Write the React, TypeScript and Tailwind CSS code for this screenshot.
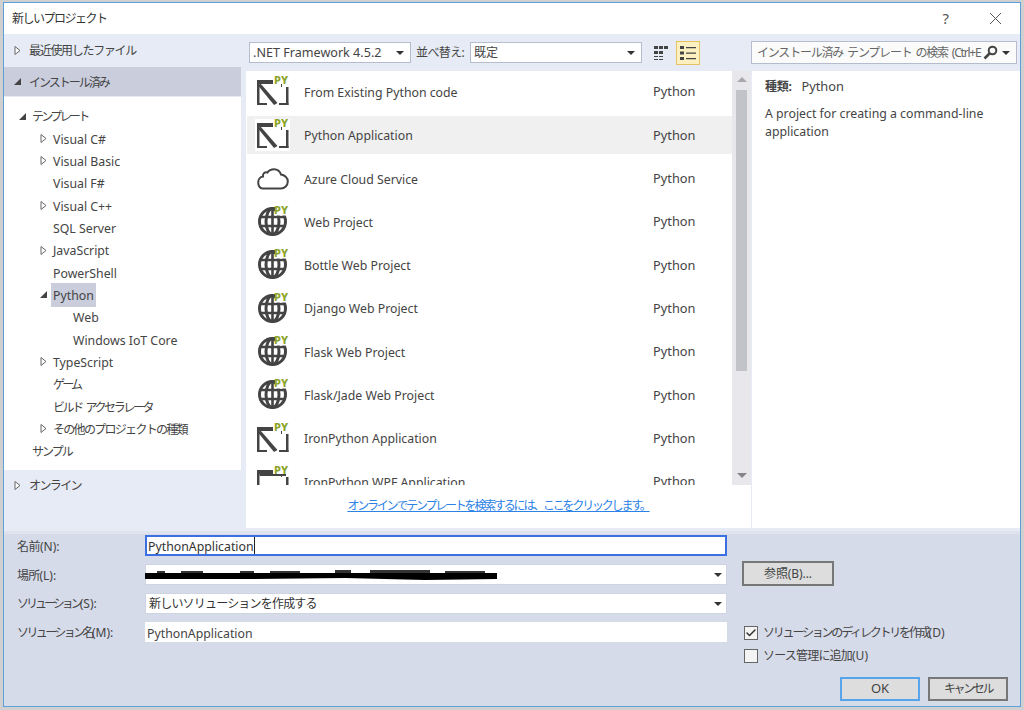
import { Check } from "lucide-react";

const templates = [
  ["From Existing Python code", "app"],
  ["Python Application", "app"],
  ["Azure Cloud Service", "cloud"],
  ["Web Project", "web"],
  ["Bottle Web Project", "web"],
  ["Django Web Project", "web"],
  ["Flask Web Project", "web"],
  ["Flask/Jade Web Project", "web"],
  ["IronPython Application", "app"],
  ["IronPython WPF Application", "wpf"],
];

const jp = "text-[12px]";

const tree = [
  { label: "テンプレート", indent: 32, arrow: "open", cls: `${jp} tracking-[-2.7px]` },
  { label: "Visual C#", indent: 53, arrow: "closed" },
  { label: "Visual Basic", indent: 53, arrow: "closed" },
  { label: "Visual F#", indent: 53 },
  { label: "Visual C++", indent: 53, arrow: "closed" },
  { label: "SQL Server", indent: 53 },
  { label: "JavaScript", indent: 53, arrow: "closed" },
  { label: "PowerShell", indent: 53 },
  { label: "Python", indent: 53, arrow: "open", selected: true },
  { label: "Web", indent: 73 },
  { label: "Windows IoT Core", indent: 73 },
  { label: "TypeScript", indent: 53, arrow: "closed" },
  { label: "ゲーム", indent: 53, cls: `${jp} tracking-[-2.8px]` },
  { label: "ビルド アクセラレータ", indent: 53, cls: `${jp} tracking-[-2.4px] [word-spacing:3px]` },
  { label: "その他のプロジェクトの種類", indent: 53, arrow: "closed", cls: `${jp} tracking-[-1.7px]` },
  { label: "サンプル", indent: 32, cls: `${jp} tracking-[-2px]` },
];

const formLabels = [
  ["名前", "(N):", "tracking-[-0.5px]"],
  ["場所", "(L):", "tracking-[-0.8px]"],
  ["ソリューション", "(S):", "tracking-[-3px]"],
  ["ソリューション名", "(M):", "tracking-[-2.6px]"],
];

function Arrow({ type }: { type?: string }) {
  if (type === "open") {
    return (
      <svg width="9" height="9" viewBox="0 0 9 9">
        <path d="M8 1V8H1Z" fill="#444" />
      </svg>
    );
  }
  return (
    <svg width="9" height="11" viewBox="0 0 9 11">
      <path d="M2 1.5L7 5.5L2 9.5Z" fill="#fff" stroke="#666" />
    </svg>
  );
}

function Caret() {
  return (
    <svg width="8" height="4" viewBox="0 0 8 4" className="shrink-0">
      <path d="M0 0H8L4 4Z" fill="#333" />
    </svg>
  );
}

function Py() {
  return (
    <span className="absolute right-0 top-[-2px] pl-px text-[11px] leading-[11px] font-extrabold tracking-[0.3px] text-[#8ca52a]">
      PY
    </span>
  );
}

function TemplateIcon({ kind }: { kind: string }) {
  if (kind === "cloud") {
    return (
      <svg width="32" height="22" viewBox="0 0 32 22" fill="none">
        <path
          d="M5.5 20.5C2.8 20.5 1.2 17.5 1.2 14.5C1.2 11.5 3 8.8 6 8.5C5.5 5.5 8 3.5 10.5 4.5C12 2.2 14.5 1.2 17 1.2C20.5 1.2 23 3.3 24 6.5C27.5 7 30.8 9.8 30.8 13.5C30.8 17.5 27.5 20.5 24 20.5Z"
          stroke="#444"
          strokeWidth="2"
        />
      </svg>
    );
  }
  if (kind === "web") {
    return (
      <div className="relative h-[32px] w-[32px]">
        <svg width="32" height="32" viewBox="0 0 32 32" fill="none" stroke="#444" strokeWidth="3">
          <circle cx="15.5" cy="15.5" r="13" />
          <ellipse cx="15.5" cy="15.5" rx="6.5" ry="13" />
          <path d="M2 11H29M2 20H29M15.5 3V28" strokeWidth="2.6" />
          <rect x="18" y="-1" width="15" height="10.5" fill="#fff" stroke="none" />
        </svg>
        <Py />
      </div>
    );
  }
  return (
    <div className="relative h-[32px] w-[32px]">
      <svg width="32" height="32" viewBox="0 0 32 32" fill="#444">
        <rect x="0" y="4" width="16" height="4" />
        <rect x="0" y="8" width="2.5" height="21" />
        <rect x="29" y="11" width="2.5" height="18" />
        <rect x="24" y="8" width="1" height="3" />
        {kind === "app" && (
          <>
            <rect x="0" y="27" width="10" height="2" />
            <rect x="22" y="27" width="9.5" height="2" />
            <path d="M1 9.5L3.5 7.5L20.5 27L17 29Z" />
          </>
        )}
        {kind === "wpf" && <rect x="2.5" y="8" width="26.5" height="2" />}
      </svg>
      <Py />
    </div>
  );
}

export default function App() {
  return (
    <div className="h-[710px] w-[1024px] overflow-hidden bg-[#d0d0d0] pl-[3px] pr-[3px] pt-[2px] pb-[3px] text-[12.3px] text-[#444] [font-family:'Noto_Sans','Noto_Sans_CJK_JP',sans-serif]">
      <div className="flex h-[705px] w-[1018px] flex-col border border-[#5f9fd8] bg-[#d6dbe9]">
        {/* title bar */}
        <div className="flex h-[31px] shrink-0 items-center bg-white pl-[8px]">
          <span className="text-[12px] tracking-[-1.5px] text-[#333]">新しいプロジェクト</span>
          <span className="ml-auto mr-[40px] text-[15px] text-[#555]">?</span>
          <svg width="13" height="13" viewBox="0 0 13 13" className="mr-[18px]" stroke="#555" strokeWidth="1">
            <path d="M1 1L12 12M12 1L1 12" />
          </svg>
        </div>

        {/* main area */}
        <div className="flex h-[497px] shrink-0 bg-[#e6ebf5]">
          <div className="flex w-[237px] shrink-0 flex-col">
            <div className="flex h-[33px] shrink-0 items-center pl-[9px]">
              <Arrow />
              <span className="ml-[7px] text-[12px] tracking-[-1.3px]">最近使用したファイル</span>
            </div>
            <div className="flex h-[29px] shrink-0 items-center bg-[#c9cddc] pl-[9px]">
              <Arrow type="open" />
              <span className="ml-[7px] pt-[2px] text-[12px] tracking-[-2px]">インストール済み</span>
            </div>
            <div className="mt-px flex h-[373px] shrink-0 flex-col bg-white pt-[8px]">
              {tree.map((item) => (
                <div key={item.label} className="relative flex h-[22.35px] shrink-0 items-center">
                  {item.arrow && (
                    <span className="absolute flex" style={{ left: item.indent - 18 }}>
                      <Arrow type={item.arrow} />
                    </span>
                  )}
                  <span
                    className={`${item.selected ? "bg-[#c9cddc]" : ""} ${item.cls ?? ""} px-[2px] pt-[2px] leading-[22px] whitespace-pre`}
                    style={{ marginLeft: item.indent - 6 }}
                  >
                    {item.label}
                  </span>
                </div>
              ))}
            </div>
            <div className="flex h-[30px] shrink-0 items-center pl-[9px]">
              <Arrow />
              <span className="ml-[7px] pt-[2px] text-[12px] tracking-[-1.6px]">オンライン</span>
            </div>
          </div>

          <div className="ml-[5px] flex min-w-0 flex-1 flex-col">
            {/* toolbar */}
            <div className="flex h-[37px] shrink-0 items-center">
              <div className="ml-[3px] flex h-[21px] w-[162px] shrink-0 items-center border border-[#b4bccd] bg-white pl-[3px] pr-[6px] pt-px text-[12.6px]">
                .NET Framework 4.5.2
                <span className="ml-auto flex">
                  <Caret />
                </span>
              </div>
              <span className="ml-[5px] w-[54px] shrink-0 text-[12px] tracking-[-0.6px]">並べ替え:</span>
              <div className="flex h-[21px] w-[172px] shrink-0 items-center border border-[#b4bccd] bg-white pl-[3px] pr-[6px] text-[12px]">
                既定
                <span className="ml-auto flex">
                  <Caret />
                </span>
              </div>
              <svg width="16" height="16" viewBox="0 0 16 16" fill="#444" className="ml-[11px]">
                <path d="M1 1h4v3H1zM6 1h4v3H6zM11 1h4v3h-4zM1 6h4v3H1zM6 6h4v3H6zM1 11h4v1H1zM6 11h4v1H6z" />
                <path d="M1 14h4v1H1zM6 14h4v1H6z" />
              </svg>
              <div className="ml-[7px] flex h-[24px] w-[24px] shrink-0 items-center justify-center border border-[#e5c365] bg-[#fdf0c0]">
                <svg width="18" height="16" viewBox="0 0 18 16" fill="#444">
                  <path d="M1 1h4v3H1zM1 6.5h4v3H1zM1 12h4v3H1zM7 2h10v1.3H7zM7 7.5h10v1.3H7zM7 13h10v1.3H7z" />
                </svg>
              </div>
              <div className="ml-[51px] flex h-[23px] w-[266px] shrink-0 items-center border border-[#b4bccd] bg-[#fbfbfb] pl-[5px] pr-[6px] text-[12px] text-[#666]">
                <span className="whitespace-pre tracking-[-1.2px] [word-spacing:2px]">インストール済み テンプレート の検索 (Ctrl+E</span>
                <svg width="15" height="15" viewBox="0 0 15 15" fill="none" stroke="#444" className="ml-auto mr-[4px] shrink-0">
                  <circle cx="9.5" cy="5.5" r="3.8" strokeWidth="2" />
                  <path d="M6.5 8.5L1.5 13.5" strokeWidth="2.6" />
                </svg>
                <Caret />
              </div>
            </div>

            <div className="flex h-[457px] shrink-0">
              {/* template list */}
              <div className="flex w-[505px] shrink-0 flex-col bg-white">
                <div className="flex h-[414px] shrink-0">
                  <div className="h-full w-[486px] shrink-0 overflow-hidden pl-px">
                    {templates.map(([name, kind], i) => {
                      const selected = name === "Python Application";
                      return (
                        <div key={name} className={`flex h-[43.33px] items-center ${i === 0 ? "mt-[-0.6px]" : ""}`}>
                          <div className={`flex h-[38px] w-full items-center ${selected ? "bg-[#f0f0f0]" : ""}`}>
                            <div className="ml-[8px] flex h-[32px] w-[35px] shrink-0 items-center justify-center bg-white">
                              <TemplateIcon kind={kind} />
                            </div>
                            <span className="ml-[14px] w-[349px] shrink-0 whitespace-nowrap pt-[2px]">{name}</span>
                            <span className="text-[12.8px]">Python</span>
                          </div>
                        </div>
                      );
                    })}
                  </div>
                  <div className="flex w-[19px] shrink-0 flex-col items-center bg-[#e8e8ec] pt-[6px]">
                    <svg width="10" height="5" viewBox="0 0 10 5">
                      <path d="M0 5L5 0L10 5Z" fill="#a8a8ae" />
                    </svg>
                    <div className="mt-[8px] h-[281px] w-[11px] bg-[#c2c3c9]" />
                    <svg width="10" height="5" viewBox="0 0 10 5" className="mt-[102px]">
                      <path d="M0 0H10L5 5Z" fill="#858589" />
                    </svg>
                  </div>
                </div>
                <div className="flex h-[43px] shrink-0 items-start justify-center pt-[12px]">
                  <span className="text-[12px] tracking-[-2.2px] text-[#2d82e6] underline">
                    オンラインでテンプレートを検索するには、ここをクリックします。
                  </span>
                </div>
              </div>

              {/* details */}
              <div className="ml-px flex-1 bg-white pl-[13px] pt-[6px]">
                <div className="flex items-center">
                  <span className="text-[12px] font-bold tracking-[-0.3px]">種類:</span>
                  <span className="ml-[10px] text-[12.8px]">Python</span>
                </div>
                <p className="mt-[9px] w-[240px] leading-[18px]">A project for creating a command-line application</p>
              </div>
            </div>
          </div>
        </div>

        {/* bottom form */}
        <div className="flex flex-1 flex-col border-t-[3px] border-[#dfe3ee] pl-[13px] pr-[12px] pt-[1px]">
          <div className="flex">
            <div className="w-[128px] shrink-0 flex-col">
              {formLabels.map(([label, key, cls]) => (
                <div key={label} className="flex h-[28.7px] items-start pt-[3px] text-[12px] whitespace-nowrap">
                  <span className={cls}>{label}</span>
                  <span>{key}</span>
                </div>
              ))}
            </div>
            <div className="flex w-[582px] shrink-0 flex-col gap-[8px]">
              <div className="flex h-[21px] items-center border-2 border-[#3c6fe0] bg-white pl-[1px] pt-[3px] text-[#333]">
                PythonApplication
                <span className="mb-[3px] h-[17px] w-px bg-[#222]" />
              </div>
              <div className="relative flex h-[21px] items-center justify-end border border-[#cfd4e2] bg-white pr-[4px]">
                <svg width="352" height="14" viewBox="0 0 352 14" className="absolute left-[-1px] top-[2px]">
                  <path d="M0 6H352V12L280 13L200 11L100 12H0Z" fill="#000" />
                  <path d="M12 4h8v2h-8zM36 4h22v2H36zM95 4h14v2H95zM125 4h30v2h-30zM190 3h16v3h-16zM225 3h60v3h-60zM300 4h40v2h-40z" fill="#333" />
                </svg>
                <Caret />
              </div>
              <div className="flex h-[21px] items-center justify-between border border-[#cfd4e2] bg-white pl-[3px] pr-[4px] text-[12px] tracking-[-0.8px] text-[#333]">
                新しいソリューションを作成する
                <Caret />
              </div>
              <div className="flex h-[20px] items-center bg-white pl-[2px] pt-[4px]">PythonApplication</div>
            </div>
            <div className="ml-[15px] flex flex-col">
              <button className="mt-[26px] h-[25px] w-[92px] border-2 border-[#777] bg-[#dddddd] pt-px text-[12px] tracking-[-0.1px]">
                参照(B)...
              </button>
              <div className="ml-[2px] mt-[38px] flex items-center whitespace-nowrap text-[12px]">
                <span className="mr-[5px] flex h-[14px] w-[14px] items-center justify-center border border-[#666] bg-[#f4f4f4]">
                  <Check size={12} strokeWidth={3} color="#333" />
                </span>
                <span className="tracking-[-2.2px]">ソリューションのディレクトリを作成</span>
                <span>(D)</span>
              </div>
              <div className="ml-[2px] mt-[5px] flex items-center whitespace-nowrap text-[12px]">
                <span className="mr-[5px] h-[14px] w-[14px] border border-[#666] bg-[#f4f4f4]" />
                <span className="tracking-[-0.8px]">ソース管理に追加</span>
                <span>(U)</span>
              </div>
            </div>
          </div>
          <div className="mt-[12px] flex justify-end gap-[8px]">
            <button className="h-[24px] w-[80px] border-2 border-[#56a5ea] bg-[#dddddd] text-[13px]">OK</button>
            <button className="h-[24px] w-[80px] border-2 border-[#777] bg-[#dddddd] text-[12px] tracking-[-2.4px]">
              キャンセル
            </button>
          </div>
        </div>
      </div>
    </div>
  );
}
